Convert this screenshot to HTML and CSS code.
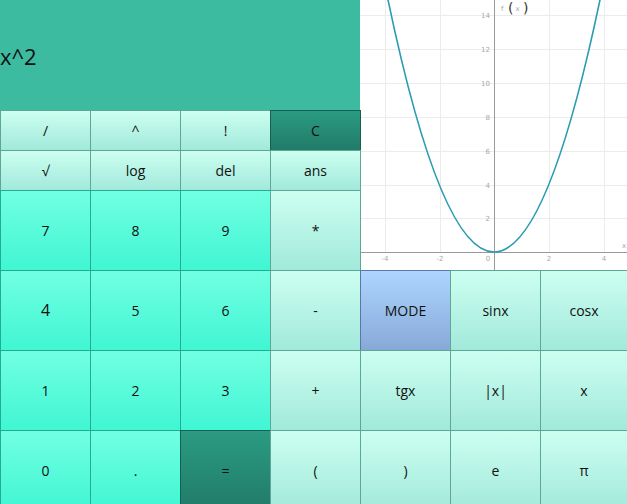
FILE: index.html
```html
<!DOCTYPE html>
<html>
<head>
<meta charset="utf-8">
<link rel="stylesheet" href="styles.css">
</head>
<body>
<div class="calc">
  <div class="display">x^2</div>
  <div class="graph">
    <svg width="267" height="270" viewBox="0 0 267 270">
      <rect x="0" y="0" width="267" height="270" fill="#ffffff"/>
      <g stroke="#ececec" stroke-width="1">
        <line x1="25.5" y1="0" x2="25.5" y2="252"/>
        <line x1="80.5" y1="0" x2="80.5" y2="252"/>
        <line x1="189.5" y1="0" x2="189.5" y2="252"/>
        <line x1="244.5" y1="0" x2="244.5" y2="252"/>
        <line x1="0" y1="15.5" x2="267" y2="15.5"/>
        <line x1="0" y1="49.5" x2="267" y2="49.5"/>
        <line x1="0" y1="83.5" x2="267" y2="83.5"/>
        <line x1="0" y1="117.5" x2="267" y2="117.5"/>
        <line x1="0" y1="151.5" x2="267" y2="151.5"/>
        <line x1="0" y1="185.5" x2="267" y2="185.5"/>
        <line x1="0" y1="218.5" x2="267" y2="218.5"/>
      </g>
      <g stroke="#9a9a9a" stroke-width="1">
        <line x1="134.5" y1="0" x2="134.5" y2="270"/>
        <line x1="0" y1="252.5" x2="267" y2="252.5"/>
      </g>
      <g class="lbl" text-anchor="end">
        <text x="130" y="18">14</text>
        <text x="130" y="52">12</text>
        <text x="130" y="86">10</text>
        <text x="130" y="120">8</text>
        <text x="130" y="154">6</text>
        <text x="130" y="188">4</text>
        <text x="130" y="221">2</text>
      </g>
      <g class="lbl" text-anchor="middle">
        <text x="25" y="261">-4</text>
        <text x="80" y="261">-2</text>
        <text x="128" y="261">0</text>
        <text x="189" y="261">2</text>
        <text x="244" y="261">4</text>
        <text x="264" y="248">x</text>
      </g>
      <text class="lbl" x="141" y="11">f</text>
      <text class="par" x="148" y="13">(</text>
      <text class="lbl" x="155.5" y="11">x</text>
      <text class="par" x="163" y="13">)</text>
      <path d="M27.3,-3.5 Q134,507.5 240.7,-3.5" fill="none" stroke="#2b9bb2" stroke-width="1.6"/>
    </svg>
  </div>
  <div class="btn op">/</div>
  <div class="btn op">^</div>
  <div class="btn op">!</div>
  <div class="btn dark">C</div>
  <div class="btn op">√</div>
  <div class="btn op">log</div>
  <div class="btn op">del</div>
  <div class="btn op">ans</div>
  <div class="btn num">7</div>
  <div class="btn num">8</div>
  <div class="btn num">9</div>
  <div class="btn op">*</div>
  <div class="btn num big">4</div>
  <div class="btn num">5</div>
  <div class="btn num">6</div>
  <div class="btn op">-</div>
  <div class="btn mode">MODE</div>
  <div class="btn op">sinx</div>
  <div class="btn op">cosx</div>
  <div class="btn num">1</div>
  <div class="btn num">2</div>
  <div class="btn num">3</div>
  <div class="btn op">+</div>
  <div class="btn op">tgx</div>
  <div class="btn op">|x|</div>
  <div class="btn op">x</div>
  <div class="btn num">0</div>
  <div class="btn num">.</div>
  <div class="btn dark">=</div>
  <div class="btn op">(</div>
  <div class="btn op">)</div>
  <div class="btn op">e</div>
  <div class="btn op">π</div>
</div>
</body>
</html>
```

FILE: styles.css
```css
html, body {
  margin: 0;
  padding: 0;
  overflow: hidden;
  background: #ffffff;
}
body {
  width: 627px;
  height: 504px;
  font-family: "Open Sans", "DejaVu Sans", sans-serif;
  color: #111;
}
.calc {
  display: grid;
  grid-template-columns: 90px 90px 90px 90px 90px 90px 87px;
  grid-template-rows: 110px 40px 40px 80px 80px 80px 80px;
  width: 627px;
}
.display {
  grid-column: 1 / 5;
  grid-row: 1;
  background: #3dbba1;
  font-size: 22px;
  display: flex;
  align-items: center;
  box-sizing: border-box;
  padding-top: 2px;
}
.graph {
  grid-column: 5 / 8;
  grid-row: 1 / 5;
  overflow: hidden;
  background: #fff;
}
.graph svg {
  display: block;
}
.lbl {
  font-family: "DejaVu Sans", sans-serif;
  font-size: 7px;
  fill: #a8a8a8;
}
.par {
  font-family: "DejaVu Sans", sans-serif;
  font-size: 14px;
  fill: #333333;
}
.btn {
  display: flex;
  align-items: center;
  justify-content: center;
  box-sizing: border-box;
  border: 1px solid;
  margin: 0 -1px -1px 0;
  font-size: 14px;
}
.op {
  background: linear-gradient(#ccfff0, #a2e9db);
  border-color: #5ea797;
}
.num {
  background: linear-gradient(#72ffe2, #40f6d3);
  border-color: #1fae92;
}
.dark {
  background: linear-gradient(#2b9b82, #217b68);
  border-color: #155f50;
}
.mode {
  background: linear-gradient(#add5ff, #88a9d8);
  border-color: #5a78a6;
}
.big {
  font-size: 16px;
  padding-bottom: 2px;
}
```
